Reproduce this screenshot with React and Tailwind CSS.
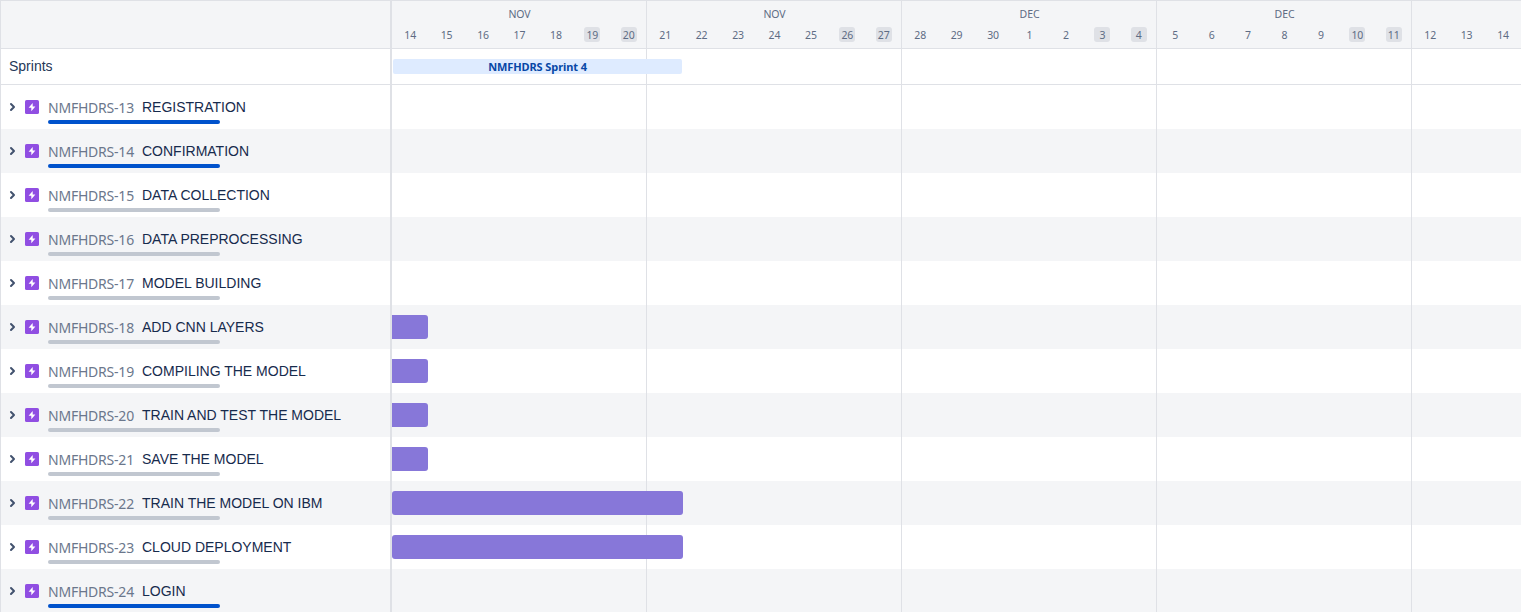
const weeks = [
  { month: 'NOV', days: [14, 15, 16, 17, 18, 19, 20] },
  { month: 'NOV', days: [21, 22, 23, 24, 25, 26, 27] },
  { month: 'DEC', days: [28, 29, 30, 1, 2, 3, 4] },
  { month: 'DEC', days: [5, 6, 7, 8, 9, 10, 11] },
  { month: '', days: [12, 13, 14] },
];

const epics = [
  { id: 13, title: 'REGISTRATION', done: true },
  { id: 14, title: 'CONFIRMATION', done: true },
  { id: 15, title: 'DATA COLLECTION' },
  { id: 16, title: 'DATA PREPROCESSING' },
  { id: 17, title: 'MODEL BUILDING' },
  { id: 18, title: 'ADD CNN LAYERS', bar: 'short' },
  { id: 19, title: 'COMPILING THE MODEL', bar: 'short' },
  { id: 20, title: 'TRAIN AND TEST THE MODEL', bar: 'short' },
  { id: 21, title: 'SAVE THE MODEL', bar: 'short' },
  { id: 22, title: 'TRAIN THE MODEL ON IBM', bar: 'long' },
  { id: 23, title: 'CLOUD DEPLOYMENT', bar: 'long' },
  { id: 24, title: 'LOGIN', done: true },
];

const barStyles = {
  short: 'w-9 rounded-r-[3px]',
  long: 'w-[291px] rounded-[3px]',
};

function WeekCells() {
  return (
    <div className="flex h-full">
      {weeks.map((week, i) => (
        <div key={i} className="w-[255px] shrink-0 border-r border-[#dfe1e6]" />
      ))}
    </div>
  );
}

function EpicRow({ epic, striped }) {
  return (
    <div className={`flex h-11 shrink-0 ${striped ? 'bg-[#f4f5f7]' : 'bg-white'}`}>
      <div className="flex w-[391px] shrink-0 border-r-2 border-[#dfe1e6]">
        <svg className="mt-4 ml-[5px] h-3 w-3 shrink-0" viewBox="0 0 12 12" fill="none" stroke="#42526e" strokeWidth="2" strokeLinecap="round" strokeLinejoin="round">
          <path d="M5 3 8 6 5 9" />
        </svg>
        <svg className="mt-[15px] ml-[7px] h-3.5 w-3.5 shrink-0" viewBox="0 0 14 14">
          <rect width="14" height="14" rx="1.6" fill="#904ee2" />
          <path d="M7.7 2.9 3.6 7.7h2.7v3.6L10.4 6.4H7.7z" fill="#fff" />
        </svg>
        <div className="ml-[9px]">
          <div className="flex h-[35px] items-center whitespace-nowrap">
            <span className="mt-[11px] w-[94px] font-['Noto_Sans','Open_Sans',sans-serif] text-[14px] leading-5 tracking-[-0.22px] text-[#6b778c]">
              NMFHDRS-{epic.id}
            </span>
            <span className="mt-[9px] font-['Liberation_Sans',Arial,sans-serif] text-[14px] leading-5 text-[#172b4d]">
              {epic.title}
            </span>
          </div>
          <div className={`h-1 w-[172px] rounded-full ${epic.done ? 'bg-[#0052cc]' : 'bg-[#c1c7d0]'}`} />
        </div>
      </div>
      <div className="relative min-w-0 flex-1 overflow-hidden">
        <WeekCells />
        {epic.bar && <div className={`absolute top-2.5 left-0 h-6 bg-[#8777d9] ${barStyles[epic.bar]}`} />}
      </div>
    </div>
  );
}

export default function App() {
  return (
    <div className="flex h-[612px] w-full flex-col overflow-hidden border-t border-l border-[#dfe1e6] bg-white font-['Noto_Sans','Open_Sans',sans-serif]">
      <header className="flex h-12 shrink-0 border-b border-[#dfe1e6] bg-[#f4f5f7]">
        <div className="w-[391px] shrink-0 border-r-2 border-[#dfe1e6]" />
        <div className="flex min-w-0 flex-1 overflow-hidden text-[10.5px] tracking-[-0.1px] text-[#5e6c84]">
          {weeks.map((week, i) => (
            <div key={i} className="w-[255px] shrink-0 border-r border-[#dfe1e6]">
              <div className="-mr-px mt-[5px] h-4 text-center leading-4">{week.month}</div>
              <div className="-mr-px mt-[5px] grid grid-cols-7 justify-items-center">
                {week.days.map((day, d) => (
                  <span key={day} className={`h-[15px] w-4 rounded-[3px] text-center leading-4 ${d > 4 ? 'bg-[#dfe1e6]' : ''}`}>
                    {day}
                  </span>
                ))}
              </div>
            </div>
          ))}
        </div>
      </header>
      <div className="flex h-9 shrink-0 border-b border-[#dfe1e6]">
        <div className="w-[391px] shrink-0 border-r-2 border-[#dfe1e6] pt-[7px] pl-2 font-['Liberation_Sans',Arial,sans-serif] text-[14px] leading-5 text-[#253858]">
          Sprints
        </div>
        <div className="relative min-w-0 flex-1 overflow-hidden">
          <WeekCells />
          <div className="absolute top-2.5 left-px h-[15px] w-[289px] rounded-[2px] bg-[#deebff] text-center text-[11px] leading-[15px] font-bold tracking-[-0.1px] text-[#0747a6]">
            NMFHDRS Sprint 4
          </div>
        </div>
      </div>
      {epics.map((epic, i) => (
        <EpicRow key={epic.id} epic={epic} striped={i % 2 === 1} />
      ))}
    </div>
  );
}
